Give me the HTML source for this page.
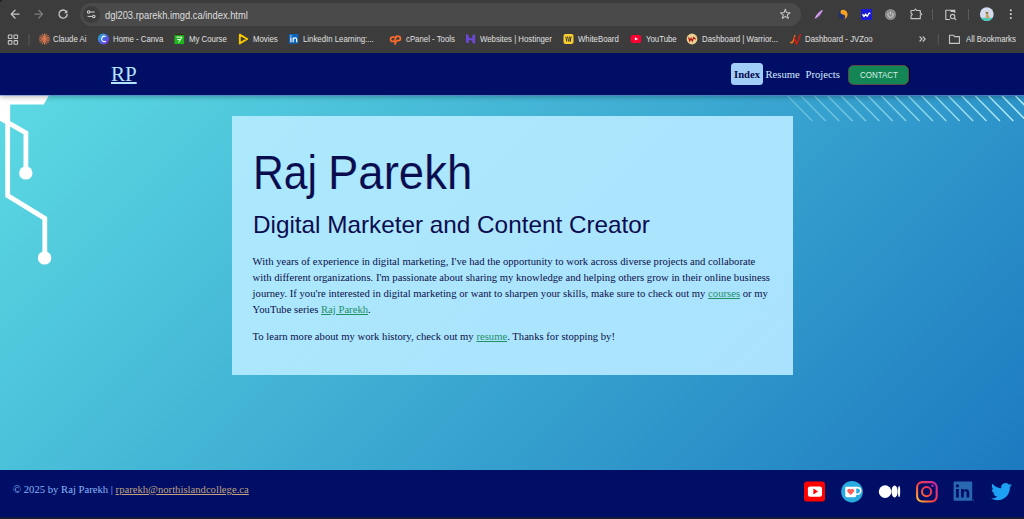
<!DOCTYPE html>
<html><head><meta charset="utf-8">
<style>
*{margin:0;padding:0;box-sizing:border-box}
html,body{width:1024px;height:519px;overflow:hidden;background:#3c3c3c;font-family:"Liberation Sans",sans-serif}
svg{position:absolute;overflow:visible}
#chrome{position:absolute;left:0;top:0;width:1024px;height:53px;background:#3c3c3c}
#omni{position:absolute;left:80px;top:3px;width:721px;height:23px;border-radius:11.5px;background:#4a4a4a}
#tune{position:absolute;left:82.75px;top:5.7px;width:17px;height:17px;border-radius:50%;background:#3c3c3c}
#url{position:absolute;left:105px;top:9.8px;font-size:10.2px;color:#dedede;white-space:nowrap;transform-origin:0 0;transform:scaleX(0.917)}
.bm{position:absolute;top:33.5px;font-size:9.3px;color:#e0e0e0;white-space:nowrap;transform-origin:0 0;transform:scaleX(0.84)}
#page{position:absolute;left:0;top:53px;width:1024px;height:465px;overflow:hidden;
 background:linear-gradient(135deg,#5edde4 0%,#1a77bf 100%)}
#nav{position:absolute;left:0;top:0;width:1024px;height:42px;background:#010e66;box-shadow:0 1px 0 rgba(90,130,220,.5),0 2px 5px rgba(0,0,0,.28)}
#logo{position:absolute;left:111px;top:9px;font-family:"Liberation Serif",serif;font-size:21px;color:#b3e3fb;text-decoration:underline;text-decoration-thickness:2px;text-underline-offset:1px}
.nl{position:absolute;top:15px;font-family:"Liberation Serif",serif;font-size:10.67px;color:#d4ecff;white-space:nowrap}
#idx{position:absolute;left:731px;top:10.4px;width:32px;height:21.6px;background:#a1cdf9;border-radius:3.5px}
#contact{position:absolute;left:848px;top:11.8px;width:61px;height:20px;background:#148656;border-radius:5.5px;border:1px solid #5e4a48;box-shadow:1px 0 1px rgba(0,0,0,.6)}
#contact span{position:absolute;left:11.4px;top:4.2px;font-size:8.7px;color:#d6f0e4;white-space:nowrap;transform-origin:0 0;transform:scaleX(0.915)}
#card{position:absolute;left:232px;top:63px;width:561px;height:259px;background:linear-gradient(135deg,#ace9fd,#aae2fd)}
.h1{position:absolute;top:27.5px;font-size:49px;color:#0b0c4e;-webkit-text-stroke:0.12px #abe6fd;white-space:nowrap;transform-origin:0 0}
#h2{position:absolute;left:21px;top:95px;font-size:24px;color:#0b0c4e;white-space:nowrap;transform-origin:0 0;transform:scaleX(1.012)}
.p{position:absolute;left:20.6px;font-family:"Liberation Serif",serif;font-size:10.67px;line-height:16px;color:#0d0f4a;width:518px}
.p a{color:#23906a;text-decoration:underline}
#footer{position:absolute;left:0;top:417px;width:1024px;height:48px;background:#010e66}
#ftxt{position:absolute;left:13px;top:13px;font-family:"Liberation Serif",serif;font-size:10.67px;color:#8ab4f8;white-space:nowrap}
#ftxt a{color:#bfa381;text-decoration:underline}
#bottomline{position:absolute;left:0;top:517px;width:1024px;height:2px;background:linear-gradient(rgba(32,32,32,.45) 50%,#202020 50%)}
</style></head><body>
<div id="chrome">
 <div style="position:absolute;left:0;top:0;width:2px;height:2px;background:#1e1e1e;border-bottom-right-radius:2px"></div>
 <!-- nav buttons -->
 <svg style="left:0;top:0" width="80" height="28">
  <g fill="none" stroke="#c7c7c7" stroke-width="1.3" stroke-linecap="round" stroke-linejoin="round">
   <path d="M19 14.1H11.3M15 10.2L11.2 14.1L15 18"/>
  </g>
  <g fill="none" stroke="#7c7c7c" stroke-width="1.3" stroke-linecap="round" stroke-linejoin="round">
   <path d="M34.8 14.1H42.5M38.8 10.2L42.6 14.1L38.8 18"/>
  </g>
  <g fill="none" stroke="#c7c7c7" stroke-width="1.3" stroke-linecap="round">
   <path d="M66.3 11.5A4.1 4.1 0 1 0 67.2 14.4"/>
  </g>
  <path d="M67.4 10L67.4 13.2L64.2 13.2Z" fill="#c7c7c7"/>
 </svg>
 <div id="omni"></div>
 <div id="tune"></div>
 <svg style="left:0;top:0" width="110" height="28">
  <g fill="none" stroke="#d0d0d0" stroke-width="1.05">
   <circle cx="88.6" cy="12" r="1.25"/><path d="M90 12H94.6"/>
   <circle cx="93.8" cy="16.4" r="1.25"/><path d="M87.6 16.4H92.4"/>
  </g>
 </svg>
 <div id="url">dgl203.rparekh.imgd.ca/index.html</div>
 <!-- star -->
 <svg style="left:778px;top:7px" width="14" height="14">
  <path d="M7.30 2.30L8.53 5.60L12.06 5.75L9.30 7.95L10.24 11.35L7.30 9.40L4.36 11.35L5.30 7.95L2.54 5.75L6.07 5.60Z" fill="none" stroke="#c7c7c7" stroke-width="1.05" stroke-linejoin="round"/>
 </svg>
 <!-- extension icons -->
 <svg style="left:810px;top:5px" width="20" height="20">
  <path d="M4.5 13.8C6 9.5 9.5 6 12.8 4.8C12 8.6 8.8 12.6 4.5 13.8Z" fill="#b77ad8"/>
  <path d="M5.5 12.8C7.5 10 10 7.5 12.3 5.6" stroke="#e8d0f5" stroke-width="0.9" fill="none"/>
  <path d="M4.4 14.2L9 13" stroke="#555" stroke-width="0.8"/>
 </svg>
 <svg style="left:832px;top:4px" width="22" height="22">
  <circle cx="10.8" cy="10.5" r="4.8" fill="#22336a"/>
  <path d="M10.8 5.7A4.8 4.8 0 0 1 10.8 15.3A2.4 2.4 0 0 0 10.8 10.5A2.4 2.4 0 0 1 10.8 5.7Z" fill="#f6a21c"/>
 </svg>
 <div style="position:absolute;left:861px;top:9px;width:11px;height:11px;background:#1b1bd6"></div>
 <svg style="left:861px;top:9px" width="11" height="11">
  <path d="M1.6 5.2L3 7.6L4.6 5L6.2 7.4L8 4.2L9.4 4.4" fill="none" stroke="#fff" stroke-width="1.3" stroke-linejoin="round"/>
 </svg>
 <svg style="left:880px;top:4px" width="22" height="22">
  <circle cx="10.5" cy="10.5" r="5.5" fill="#8c8c8c"/>
  <path d="M8.6 8.9A2.6 2.6 0 1 0 12.4 8.9" fill="none" stroke="#d5d5d5" stroke-width="0.9"/>
  <path d="M10.5 7.6V10.3" stroke="#d5d5d5" stroke-width="0.9"/>
 </svg>
 <svg style="left:905px;top:4px" width="20" height="20">
  <path d="M6 6.5H9.3L10.5 5L11.7 6.5H15.3V9.2L16.8 10.2L15.3 11.2V14.6H6V11.8L7.3 10.5L6 9.2Z" fill="none" stroke="#c7c7c7" stroke-width="1.1" stroke-linejoin="round"/>
 </svg>
 <div style="position:absolute;left:932px;top:9px;width:1px;height:11px;background:#5c5c5c"></div>
 <svg style="left:944px;top:8px" width="14" height="14">
  <path d="M6 11.5H1.8V2.2H10.8V5" fill="none" stroke="#c7c7c7" stroke-width="1.1"/>
  <rect x="6.6" y="2" width="4.4" height="2" fill="#c7c7c7"/>
  <circle cx="8.6" cy="8.6" r="2.2" fill="none" stroke="#c7c7c7" stroke-width="1.1"/>
  <path d="M10.2 10.2L12.2 12" stroke="#c7c7c7" stroke-width="1.1"/>
 </svg>
 <div style="position:absolute;left:968px;top:9px;width:1px;height:11px;background:#5c5c5c"></div>
 <svg style="left:976px;top:3px" width="22" height="22">
  <defs><clipPath id="av"><circle cx="10.8" cy="11.1" r="6.9"/></clipPath></defs>
  <g clip-path="url(#av)">
   <rect x="0" y="0" width="22" height="22" fill="#d6dcef"/>
   <rect x="0" y="14.8" width="22" height="8" fill="#3fcdb9"/>
   <path d="M9.5 7.2L10.2 9.2H11.6L12.3 7.2L12.6 9.8L12.2 11L13.6 14.6L12.8 15.4H9.6L9.9 11L9.4 9.8Z" fill="#c9a46a"/>
   <path d="M10.3 9.3H11.5V10.6H10.3Z" fill="#3a2a1a"/>
  </g>
 </svg>
 <svg style="left:1005px;top:4px" width="12" height="22">
  <circle cx="5.8" cy="6.2" r="1.05" fill="#d0d0d0"/>
  <circle cx="5.8" cy="10.1" r="1.05" fill="#d0d0d0"/>
  <circle cx="5.8" cy="14" r="1.05" fill="#d0d0d0"/>
 </svg>

 <!-- bookmarks bar icons -->
 <svg style="left:0;top:28px" width="1024" height="25">
  <!-- apps -->
  <g fill="none" stroke="#c7c7c7" stroke-width="1.05">
   <rect x="8.3" y="6.9" width="3.6" height="3.6" rx="0.5"/><rect x="14" y="6.9" width="3.6" height="3.6" rx="0.5"/>
   <rect x="8.3" y="12.6" width="3.6" height="3.6" rx="0.5"/><rect x="14" y="12.6" width="3.6" height="3.6" rx="0.5"/>
  </g>
  <rect x="28.5" y="6" width="1" height="11" fill="#5a5a5a"/>
  <!-- claude -->
  <g stroke="#d9774f" stroke-width="1" stroke-linecap="round">
   <path d="M44.5 5.8V16.2M39.3 11H49.7M40.8 7.3L48.2 14.7M48.2 7.3L40.8 14.7M42.5 6.1L46.5 15.9M46.5 6.1L42.5 15.9M39.6 9L49.4 13M49.4 9L39.6 13"/>
  </g>
  <!-- canva -->
  <defs>
   <linearGradient id="cv" x1="0" y1="0" x2="1" y2="1"><stop offset="0" stop-color="#17c3d0"/><stop offset="0.55" stop-color="#4c5de0"/><stop offset="1" stop-color="#8a2ee0"/></linearGradient>
   <linearGradient id="ig" x1="0" y1="1" x2="1" y2="0"><stop offset="0" stop-color="#fdd135"/><stop offset="0.45" stop-color="#fd3f3a"/><stop offset="1" stop-color="#c82bb0"/></linearGradient>
  </defs>
  <circle cx="103.5" cy="11" r="5.6" fill="url(#cv)"/>
  <path d="M105.6 8.6A2.7 2.7 0 1 0 105.8 13.2" fill="none" stroke="#fff" stroke-width="1.1"/>
  <!-- my course -->
  <rect x="174.5" y="5.5" width="9.6" height="10.6" fill="#1fb51f"/>
  <rect x="174.5" y="5.5" width="9.6" height="1.6" fill="#402020"/>
  <path d="M176.5 9.2H182L178.6 14.6M177 11.6H180.8" fill="none" stroke="#e8ffe8" stroke-width="1"/>
  <!-- movies -->
  <path d="M239.8 6.6L247.2 11L239.8 15.4Z" fill="none" stroke="#f7c600" stroke-width="1.9" stroke-linejoin="round"/>
  <!-- linkedin -->
  <rect x="289" y="6" width="9.2" height="9.6" fill="#0a66c2"/>
  <path d="M290.9 9.5V14.2M293.2 9.5V14.2M293.2 11.3C293.6 9.4 296.7 9.3 296.7 11.5V14.2" fill="none" stroke="#fff" stroke-width="1.2"/>
  <circle cx="290.9" cy="7.9" r="0.7" fill="#fff"/>
  <!-- cpanel -->
  <path d="M394 9.2H392.6A2.1 2.1 0 0 0 392.6 13.4H394.5L396.2 8.4H398.3A2.1 2.1 0 0 1 398.3 12.6H396.8M396 13.9L394.9 16" fill="none" stroke="#ff6b2a" stroke-width="1.7" stroke-linecap="round"/>
  <!-- hostinger -->
  <path d="M466 6L468.8 7.2V9.8L472.3 10.4V7.2L475.1 6.2V16L472.3 14.8V12.6L468.8 12V15.4L466 14.6Z" fill="#6b48d6"/>
  <!-- whiteboard -->
  <rect x="563.5" y="6" width="10" height="10" rx="2" fill="#f9cf2f"/>
  <path d="M565.8 8.5L566.8 13.5M567.6 8.5L568.6 13.5M569.5 8.5L570.4 13.5M571.2 8.5L570 13.5" stroke="#222" stroke-width="0.9"/>
  <!-- youtube -->
  <rect x="630.7" y="6.9" width="10.4" height="8" rx="2" fill="#ff0033"/>
  <path d="M634.9 9.2L638.1 10.9L634.9 12.6Z" fill="#fff"/>
  <!-- warrior -->
  <circle cx="692" cy="11" r="5.4" fill="#ead08e"/>
  <path d="M688.6 9.4L689.7 13L691 10.4L692.3 13L693.6 9.6L695.6 11.3" fill="none" stroke="#b01818" stroke-width="1.2"/>
  <!-- jvzoo -->
  <path d="M790.6 14.2C791.8 15.6 793 14 793.6 12L794.8 7.6" fill="none" stroke="#f0781e" stroke-width="1.4" stroke-linecap="round"/>
  <path d="M794.2 9.4L796.6 16.2L800.4 6.6" fill="none" stroke="#e0180c" stroke-width="1.4" stroke-linecap="round" stroke-linejoin="round"/>
  <!-- chevrons -->
  <path d="M919.6 8.5L922 11L919.6 13.5M922.8 8.5L925.2 11L922.8 13.5" fill="none" stroke="#c7c7c7" stroke-width="1.1"/>
  <rect x="937.8" y="5.8" width="1" height="11" fill="#5a5a5a"/>
  <!-- folder -->
  <path d="M949.5 7.2H953.3L954.6 8.6H959.4V15.4H949.5Z" fill="none" stroke="#c7c7c7" stroke-width="1.1" stroke-linejoin="round"/>
 </svg>
 <div class="bm" style="left:53.4px">Claude Ai</div>
 <div class="bm" style="left:112.9px">Home - Canva</div>
 <div class="bm" style="left:188.5px">My Course</div>
 <div class="bm" style="left:252.7px">Movies</div>
 <div class="bm" style="left:303px">LinkedIn Learning:...</div>
 <div class="bm" style="left:406.2px">cPanel - Tools</div>
 <div class="bm" style="left:480px">Websites | Hostinger</div>
 <div class="bm" style="left:578px">WhiteBoard</div>
 <div class="bm" style="left:645.5px">YouTube</div>
 <div class="bm" style="left:701.7px">Dashboard | Warrior...</div>
 <div class="bm" style="left:804.6px">Dashboard - JVZoo</div>
 <div class="bm" style="left:965.5px">All Bookmarks</div>
</div>

<div id="page">
 <!-- circuit decoration -->
 <svg style="left:0;top:0" width="80" height="220">
  <path d="M0 30H55.8L43.8 51.4H10.1V67H0Z" fill="#fff"/>
  <g fill="none" stroke="#ffffff" stroke-width="4.8" stroke-linejoin="miter" stroke-miterlimit="10">
   <path d="M7.7 45V142.6L44.8 165.4V205"/>
   <path d="M-10 59.1L25.9 80V120"/>
  </g>
  <circle cx="25.8" cy="119.9" r="6.7" fill="#fff"/>
  <circle cx="44.6" cy="204.9" r="6.7" fill="#fff"/>
 </svg>
 <!-- diagonal lines top right -->
 <svg style="left:0;top:0" width="1024" height="80">
  <defs>
   <linearGradient id="lf" x1="780" y1="0" x2="1024" y2="0" gradientUnits="userSpaceOnUse">
    <stop offset="0" stop-color="#b8f2f6" stop-opacity="0.3"/>
    <stop offset="0.5" stop-color="#b8f4f8" stop-opacity="0.62"/>
    <stop offset="1" stop-color="#c0f6fa" stop-opacity="0.92"/>
   </linearGradient>
  </defs>
  <g stroke="url(#lf)" stroke-width="1.45">
   <path d="M787.7 43L812.3 68M801.1 43L825.7 68M814.5 43L839.1 68M827.9 43L852.5 68M841.3 43L865.9 68M854.7 43L879.3 68M868.1 43L892.7 68M881.5 43L906.1 68M894.9 43L919.5 68M908.3 43L932.9 68M921.7 43L946.3 68M935.1 43L959.7 68M948.5 43L973.1 68M961.9 43L986.5 68M975.3 43L999.9 68M988.7 43L1013.3 68M1002.1 43L1026.7 68M1015.5 43L1040.1 68M1028.9 43L1053.5 68"/>
  </g>
 </svg>
 <div id="nav">
  <div id="logo">RP</div>
  <div id="idx"></div>
  <div class="nl" style="left:734px;color:#08094a;font-weight:bold">Index</div>
  <div class="nl" style="left:765.5px">Resume</div>
  <div class="nl" style="left:805.5px">Projects</div>
  <div id="contact"><span>CONTACT</span></div>
 </div>
 <div id="card">
  <div class="h1" style="left:21.4px;transform:scaleX(0.87)">Raj</div><div class="h1" style="left:95.9px;transform:scaleX(0.929)">Parekh</div>
  <div id="h2">Digital Marketer and Content Creator</div>
  <div class="p" style="top:137px">With years of experience in digital marketing, I've had the opportunity to work across diverse projects and collaborate with different organizations. I'm passionate about sharing my knowledge and helping others grow in their online business journey. If you're interested in digital marketing or want to sharpen your skills, make sure to check out my <a>courses</a> or my YouTube series <a>Raj Parekh</a>.</div>
  <div class="p" style="top:212px">To learn more about my work history, check out my <a>resume</a>. Thanks for stopping by!</div>
 </div>
 <div id="footer">
  <div id="ftxt">© 2025 by Raj Parekh | <a>rparekh@northislandcollege.ca</a></div>
  <svg style="left:0;top:0" width="1024" height="48">
   <!-- youtube -->
   <rect x="804" y="11.4" width="21" height="20.2" rx="3.2" fill="#ff0000"/>
   <rect x="807.9" y="16.4" width="14.1" height="10.3" rx="2.2" fill="#fff"/>
   <path d="M813.4 18.6L818 21.5L813.4 24.4Z" fill="#ff0000"/>
   <!-- kofi -->
   <circle cx="852" cy="21.7" r="10.8" fill="#29abe0"/>
   <path d="M845.3 16.8H856.2V25.6A1.6 1.6 0 0 1 854.6 27.2H846.9A1.6 1.6 0 0 1 845.3 25.6Z" fill="#fff"/>
   <path d="M856 17.6H857.4A3.3 3.3 0 0 1 857.4 24.2H856" fill="none" stroke="#fff" stroke-width="1.6"/>
   <path d="M850.7 25L847.6 22A1.7 1.7 0 0 1 850.7 19.6A1.7 1.7 0 0 1 853.8 22Z" fill="#ff5e5b"/>
   <!-- medium -->
   <ellipse cx="885.1" cy="21.6" rx="6.3" ry="6.3" fill="#fff"/>
   <ellipse cx="894.6" cy="21.6" rx="3.1" ry="6" fill="#fff"/>
   <ellipse cx="899.1" cy="21.6" rx="1.1" ry="5.6" fill="#fff"/>
   <!-- instagram -->
   <rect x="917.1" y="12.1" width="19.6" height="19.4" rx="5.2" fill="none" stroke="url(#ig2)" stroke-width="2.1"/>
   <circle cx="926.6" cy="21.6" r="4.6" fill="none" stroke="url(#ig2)" stroke-width="2"/>
   <circle cx="932.5" cy="15.8" r="1.2" fill="#c82bb0"/>
   <defs><linearGradient id="ig2" x1="916" y1="32" x2="938" y2="11" gradientUnits="userSpaceOnUse"><stop offset="0" stop-color="#fcc83a"/><stop offset="0.45" stop-color="#fc3d3d"/><stop offset="1" stop-color="#c724b1"/></linearGradient></defs>
   <!-- linkedin -->
   <rect x="953.6" y="11.6" width="18.6" height="19.2" rx="0.8" fill="#2867b2"/>
   <rect x="956" y="19" width="2.8" height="8.6" fill="#010e66"/>
   <circle cx="957.4" cy="15.8" r="1.6" fill="#010e66"/>
   <path d="M961 19H963.7V20.4C964.6 18.7 969.3 18.2 969.3 22.2V27.6H966.5V22.9C966.5 20.8 963.8 20.8 963.8 23V27.6H961Z" fill="#010e66"/>
   <circle cx="973.4" cy="30.2" r="0.6" fill="#2867b2"/>
   <!-- twitter -->
   <path transform="translate(991 11.1) scale(0.875)" d="M23.953 4.57a10 10 0 01-2.825.775 4.958 4.958 0 002.163-2.723c-.951.555-2.005.959-3.127 1.184a4.92 4.92 0 00-8.384 4.482C7.69 8.095 4.067 6.13 1.64 3.162a4.822 4.822 0 00-.666 2.475c0 1.71.87 3.213 2.188 4.096a4.904 4.904 0 01-2.228-.616v.06a4.923 4.923 0 003.946 4.827 4.996 4.996 0 01-2.212.085 4.936 4.936 0 004.604 3.417 9.867 9.867 0 01-6.102 2.105c-.39 0-.779-.023-1.17-.067a13.995 13.995 0 007.557 2.209c9.053 0 13.998-7.496 13.998-13.985 0-.21 0-.42-.015-.63A9.935 9.935 0 0024 4.59z" fill="#1da1f2"/>
  </svg>
 </div>
</div>
<div id="bottomline"></div>
</body></html>
